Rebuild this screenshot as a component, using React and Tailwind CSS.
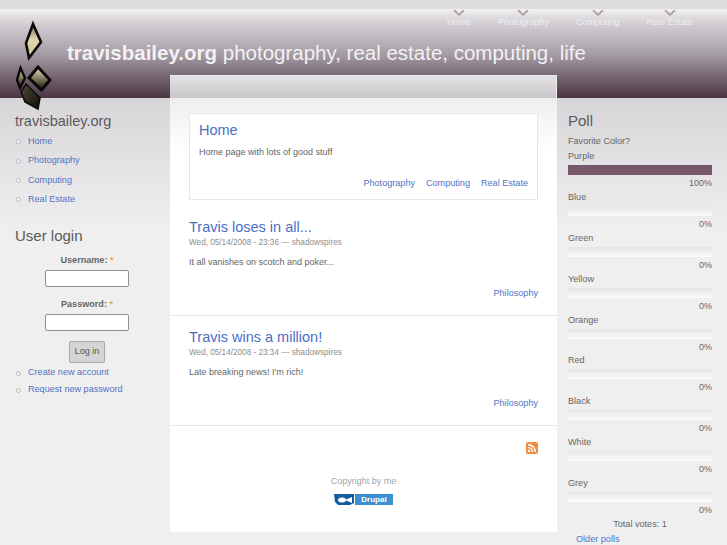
const F = { fontFamily: '"Liberation Sans", Arial, sans-serif' };

function Logo() {
  return (
    <svg className="absolute left-0 top-0" width="60" height="115" viewBox="0 0 60 115">
      <defs>
        <linearGradient id="g1" x1="0" y1="0" x2="0" y2="1"><stop offset="0" stopColor="#6f6748" /><stop offset="0.45" stopColor="#e0d6ae" /><stop offset="1" stopColor="#cfc59c" /></linearGradient>
        <linearGradient id="g2" x1="0" y1="0" x2="0" y2="1"><stop offset="0.1" stopColor="#d9cfa6" /><stop offset="0.9" stopColor="#2a271b" /></linearGradient>
        <linearGradient id="g3" x1="0" y1="0" x2="1" y2="1"><stop offset="0" stopColor="#4f4b3a" /><stop offset="1" stopColor="#0f0e09" /></linearGradient>
      </defs>
      <path d="M33 24 L41 42 L29 58 L26 43 Z" fill="url(#g1)" stroke="#0a0a0a" strokeWidth="2.6" strokeLinejoin="miter" />
      <path d="M20.5 68 L25 78 L20 88 L17 80 Z" fill="url(#g2)" stroke="#0a0a0a" strokeWidth="2.4" />
      <path d="M38 67 L50 80 L41.5 90 L29 78 Z" fill="url(#g2)" stroke="#0a0a0a" strokeWidth="3" />
      <path d="M26 84 L40 98 L38 109 L25 102 L21 92 Z" fill="url(#g3)" stroke="#0a0a0a" strokeWidth="1.5" />
    </svg>
  );
}

function Bullet({ children, cls = "h-[19.4px]" }) {
  return (
    <li className={`flex items-center ${cls}`}>
      <span className="w-[5px] h-[5px] rounded-full border border-[#bbbbbb] bg-[#f4f4f4] ml-[16px] mr-[7px]" />
      <a className="text-[#4f74c4]">{children}</a>
    </li>
  );
}

function PollRow({ name, pct }) {
  const full = pct === "100%";
  return (
    <div className="h-[40.9px]">
      <div className="h-[15px] leading-[15px]">{name}</div>
      <div className={`mt-[1px] h-[10px] ${full ? "bg-[#75586a]" : "bg-gradient-to-b from-[#e6e5e6] to-[#fbfbfb]"}`} />
      <div className="text-right leading-[13px] mt-[2px] text-[9px]">{pct}</div>
    </div>
  );
}

function Post({ title, meta, body, tag, cls }) {
  return (
    <div className={`px-[19px] border-b border-[#e9e9e9] h-[110px] ${cls}`}>
      <div className="text-[#4a70c4] text-[14.5px] leading-[20px] pt-[11px]">{title}</div>
      <div className="text-[#8d8d8d] text-[8.2px] leading-[11px]">{meta}</div>
      <div className="text-[#666666] text-[9px] mt-[8px] leading-[12px]">{body}</div>
      <div className="text-right text-[#4f74c4] mt-[19px] leading-[12px]">{tag}</div>
    </div>
  );
}

export default function App() {
  return (
    <div style={F} className="relative w-[727px] h-[545px] overflow-hidden bg-[#f0eff0] text-[9.1px] text-[#666666]">
      <div className="h-[9px] bg-[#dfdcdf]" />
      <div className="h-[89px] border-t-2 border-[#f0eef0] bg-[linear-gradient(to_bottom,#eeecee_0%,#d2ced2_14%,#c0bac0_30%,#a198a0_52%,#75656f_76%,#4a3442_100%)]">
        <div className="flex justify-end pr-[34px] pt-[5px] text-[#f1eff1] text-[9px] leading-[12px]">
          <div className="flex gap-[27px] items-start">
            {["Home", "Photography", "Computing", "Real Estate"].map((n) => (
              <div key={n} className="relative">
                <svg className="absolute left-1/2 -ml-[6px] -top-[6px]" width="12" height="6" viewBox="0 0 12 6"><path d="M1 0 L6 5 L11 0" fill="none" stroke="#a8a2a8" strokeWidth="1.8" /></svg>
                {n}
              </div>
            ))}
          </div>
        </div>
        <div className="pl-[67px] pt-[12px] text-[20.5px] leading-[26px] text-[#f3f1f3] whitespace-nowrap">
          <b>travisbailey.org</b> photography, real estate, computing, life
        </div>
      </div>
      <div className="flex h-[447px] bg-[linear-gradient(to_bottom,#d8d5d8_0%,#f0eff0_30%)]">
        <div className="w-[170px] pl-[15px] pt-[13px]">
          <div className="text-[14.5px] leading-[20px] text-[#5a5a5a]">travisbailey.org</div>
          <ul className="-ml-[15px] mt-[1px]">
            {["Home", "Photography", "Computing", "Real Estate"].map((n) => <Bullet key={n}>{n}</Bullet>)}
          </ul>
          <div className="text-[15px] leading-[20px] text-[#5a5a5a] mt-[16px]">User login</div>
          <div className="-ml-[11px] flex flex-col items-center mt-[8px]">
            <div className="font-bold leading-[12px]">Username: <span className="text-[#f0a040]">*</span></div>
            <div className="w-[84px] h-[17px] mt-[4px] bg-white border border-[#8f8f8f] rounded-[2px]" />
            <div className="font-bold leading-[12px] mt-[11px]">Password: <span className="text-[#f0a040]">*</span></div>
            <div className="w-[84px] h-[17px] mt-[4px] bg-white border border-[#8f8f8f] rounded-[2px]" />
            <div className="w-[36px] h-[22px] mt-[10px] bg-[#d5d5d5] border border-[#a8a8a8] rounded-[2px] flex items-center justify-center text-[#555555]">Log in</div>
          </div>
          <ul className="-ml-[15px] mt-[2px]">
            <Bullet cls="h-[17px]">Create new account</Bullet>
            <Bullet cls="h-[17px]">Request new password</Bullet>
          </ul>
        </div>
        <div className="w-[387px] h-[457px] -mt-[23px] flex flex-col">
          <div className="h-[23px] shrink-0 bg-gradient-to-b from-[#e4e2e4] to-[#c9c6c9] border-t border-r border-[#ece9ec]" />
          <div className="flex-1 bg-[linear-gradient(to_bottom,#eeeeee_0%,#ffffff_12%)] rounded-b-[2px]">
            <div className="mx-[19px] mt-[15px] h-[87px] bg-white border border-[#e6e6e6] px-[9px]">
              <div className="text-[#4a70c4] text-[14.5px] leading-[20px] pt-[6px] box-content">Home</div>
              <div className="mt-[6px] leading-[12px] text-[9px]">Home page with lots of good stuff</div>
              <div className="flex justify-end gap-[11px] text-[#4f74c4] mt-[19px] leading-[12px]">
                <span>Photography</span><span>Computing</span><span>Real Estate</span>
              </div>
            </div>
            <Post cls="mt-[6px]" title="Travis loses in all..." meta="Wed, 05/14/2008 - 23:36 — shadowspires" body="It all vanishes on scotch and poker..." tag="Philosophy" />
            <Post title="Travis wins a million!" meta="Wed, 05/14/2008 - 23:34 — shadowspires" body="Late breaking news!  I'm rich!" tag="Philosophy" />
            <div className="flex justify-end pr-[19px] pt-[16px]">
              <svg width="12" height="12" viewBox="0 0 12 12"><rect width="12" height="12" rx="2" fill="#f08a3c" /><circle cx="3" cy="9" r="1.3" fill="#fff" /><path d="M2 5.5a4.5 4.5 0 0 1 4.5 4.5M2 2.7A7.3 7.3 0 0 1 9.3 10" fill="none" stroke="#fff" strokeWidth="1.5" /></svg>
            </div>
            <div className="text-center text-[#a3a3a3] text-[9px] leading-[12px] mt-[21px]">Copyright by me</div>
            <div className="flex justify-center mt-[7px]">
              <div className="flex h-[11px] w-[59px]">
                <svg width="20" height="11" viewBox="0 0 20 11"><path d="M0 0H20V9L16 11H4L1 8Z" fill="#155c9e" /><ellipse cx="8" cy="6" rx="4" ry="2.5" fill="#fff" /><path d="M11 6L18 3V9Z" fill="#fff" /></svg>
                <div className="ml-[1px] flex-1 bg-[#3d8fd1] text-white font-bold text-[8px] leading-[11px] text-center">Drupal</div>
              </div>
            </div>
          </div>
        </div>
        <div className="w-[170px] pl-[11px] pr-[15px] pt-[13px]">
          <div className="text-[15px] leading-[20px] text-[#5a5a5a]">Poll</div>
          <div className="leading-[13px] mt-[4px] h-[14px]">Favorite Color?</div>
          {[["Purple", "100%"], ["Blue", "0%"], ["Green", "0%"], ["Yellow", "0%"], ["Orange", "0%"], ["Red", "0%"], ["Black", "0%"], ["White", "0%"], ["Grey", "0%"]].map(([n, p]) => <PollRow key={n} name={n} pct={p} />)}
          <div className="text-center leading-[12px] mt-[1px]">Total votes: 1</div>
          <div className="pl-[8px] text-[#4f74c4] leading-[12px] mt-[3px]">Older polls</div>
        </div>
      </div>
      <Logo />
    </div>
  );
}
